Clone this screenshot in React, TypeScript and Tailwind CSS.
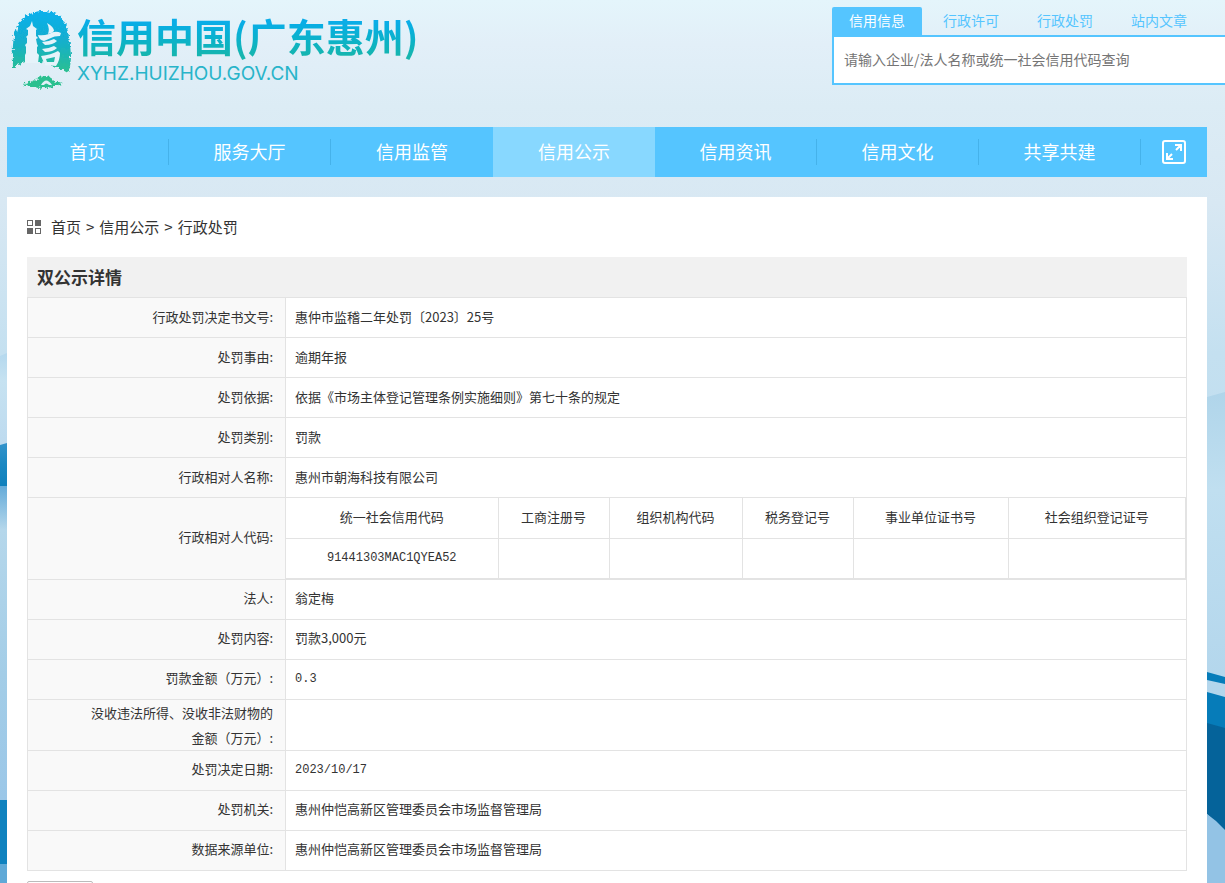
import React from 'react'

type Row = {
  label: string,
  value?: string,
  mono?: boolean,
  codes?: boolean
}

const tabs = ['信用信息', '行政许可', '行政处罚', '站内文章']
const menus = ['首页', '服务大厅', '信用监管', '信用公示', '信用资讯', '信用文化', '共享共建']

const rows: Row[] = [
  { label: '行政处罚决定书文号:', value: '惠仲市监稽二年处罚〔2023〕25号' },
  { label: '处罚事由:', value: '逾期年报' },
  { label: '处罚依据:', value: '依据《市场主体登记管理条例实施细则》第七十条的规定' },
  { label: '处罚类别:', value: '罚款' },
  { label: '行政相对人名称:', value: '惠州市朝海科技有限公司' },
  { label: '行政相对人代码:', codes: true },
  { label: '法人:', value: '翁定梅' },
  { label: '处罚内容:', value: '罚款3,000元' },
  { label: '罚款金额（万元）:', value: '0.3', mono: true },
  { label: '没收违法所得、没收非法财物的金额（万元）:' },
  { label: '处罚决定日期:', value: '2023/10/17', mono: true },
  { label: '处罚机关:', value: '惠州仲恺高新区管理委员会市场监督管理局' },
  { label: '数据来源单位:', value: '惠州仲恺高新区管理委员会市场监督管理局' },
]

const codes = [
  { name: '统一社会信用代码', value: '91441303MAC1QYEA52', width: 'w-[212px]' },
  { name: '工商注册号', value: '', width: 'w-[111px]' },
  { name: '组织机构代码', value: '', width: 'w-[133px]' },
  { name: '税务登记号', value: '', width: 'w-[111px]' },
  { name: '事业单位证书号', value: '', width: 'w-[155px]' },
  { name: '社会组织登记证号', value: '', width: '' },
]

const Backdrop = () => (
  <svg className="absolute inset-0 w-full h-full" viewBox="0 0 1225 883" preserveAspectRatio="none" aria-hidden="true">
    <defs>
      <linearGradient id="sky" x1="0" y1="0" x2="0" y2="1">
        <stop offset="0" stopColor="#e4f5fb" />
        <stop offset="0.05" stopColor="#e2eff8" />
        <stop offset="0.12" stopColor="#dcecf5" />
        <stop offset="0.23" stopColor="#d8e8f3" />
        <stop offset="0.4" stopColor="#c4e0f0" />
        <stop offset="1" stopColor="#b4d6ec" />
      </linearGradient>
      <linearGradient id="hillLeft" x1="0" y1="0" x2="0" y2="1">
        <stop offset="0" stopColor="#b4d8ee" />
        <stop offset="0.3" stopColor="#c6e2f1" />
        <stop offset="1" stopColor="#bddaef" />
      </linearGradient>
      <linearGradient id="deepLeft" x1="0" y1="0" x2="0" y2="1">
        <stop offset="0" stopColor="#3393cb" />
        <stop offset="0.5" stopColor="#1b88c2" />
        <stop offset="1" stopColor="#0f80bc" />
      </linearGradient>
      <linearGradient id="waterLeft" x1="0" y1="0" x2="0" y2="1">
        <stop offset="0" stopColor="#64abd9" />
        <stop offset="0.14" stopColor="#b5d7eb" />
        <stop offset="0.6" stopColor="#a3cde7" />
        <stop offset="1" stopColor="#9bc7e8" />
      </linearGradient>
      <linearGradient id="hillRight" x1="0" y1="0" x2="0" y2="1">
        <stop offset="0" stopColor="#b0d5ea" />
        <stop offset="0.2" stopColor="#c0dff0" />
        <stop offset="1" stopColor="#a6cde8" />
      </linearGradient>
    </defs>
    <rect width="1225" height="883" fill="url(#sky)" />
    <path d="M0 356 L7 353 V446 H0z" fill="url(#hillLeft)" />
    <path d="M0 445 L7 443 V486 H0z" fill="url(#deepLeft)" />
    <rect y="486" width="7" height="314" fill="url(#waterLeft)" />
    <rect y="800" width="7" height="64" fill="#0f82bf" />
    <rect y="864" width="7" height="19" fill="#5fa9d7" />
    <path d="M1207 397 L1225 392 V883 H1207z" fill="url(#hillRight)" />
    <path d="M1207 672 L1225 677 V684 L1207 680z" fill="#067cb9" />
    <path d="M1207 692 L1225 697 V730 H1207z" fill="#067cb9" />
    <path d="M1207 723 L1225 728 V832 L1207 814z" fill="#05639a" />
    <path d="M1207 814 L1216 821 L1225 830 V883 H1207z" fill="#93c3e5" />
  </svg>
)

const LogoMark = () => (
  <svg width="66" height="84" viewBox="0 0 66 84" aria-hidden="true">
    <defs>
      <linearGradient id="seal" x1="0" y1="0" x2="0" y2="1">
        <stop offset="0" stopColor="#10b0ec" />
        <stop offset="0.45" stopColor="#12aed0" />
        <stop offset="1" stopColor="#2cc08f" />
      </linearGradient>
      {/* rough, stamped edge */}
      <filter id="rough" x="-10%" y="-10%" width="120%" height="120%">
        <feTurbulence type="fractalNoise" baseFrequency="0.35" numOctaves="2" seed="4" result="noise" />
        <feDisplacementMap in="SourceGraphic" in2="noise" scale="6" xChannelSelector="R" yChannelSelector="G" />
      </filter>
    </defs>
    <g filter="url(#rough)">
      <path
        d="M35 3 C46 3 53 7 57 15 C61 23 62 35 63 47 C63 54 62 60 60 65 C51 60 44 57 37 55 C30 53 22 53 15 55 C11 56 8 58 5 61 C5 50 4 40 6 29 C8 19 11 12 18 8 C23 5 28 3 35 3z"
        fill="url(#seal)"
      />
      <path d="M13 75 C21 75 26 73 29 71 C36 66 42 68 46 73 C49 75 52 74 56 75 C51 77 46 78 41 80 L36 79 31 80 C25 78 18 78 13 75z" fill="#2cc08f" />
    </g>
    <path d="M24 13 L25 18 29 21 28 22 28 28 30 30 28 31 29 36 30 38 29 39 29 45 31 47 30 55 17 55 17 47 18 45 18 39 17 37 19 35 19 30 18 29 20 27 20 22 18 21 22 18z" fill="#e5f3fa" />
    <g fill="#e5f3fa">
      <path d="M39 15 Q46 19 46 23 Q43 26 40 26 Q42 21 39 15z" />
      <path d="M30 27 Q35 28 41 26 Q47 22 53 25 L52 28 Q46 28 43 30 L36 33 Q31 32 30 27z" />
      <path d="M34 34 Q40 34 46 31 L49 33 Q45 37 37 37z" />
      <path d="M34 41 Q40 41 46 38 L49 40 Q45 44 37 44z" />
      <path fillRule="evenodd" d="M33 48 Q43 47 50 43 L52 45 Q52 52 48 58 L37 57z M38 51 L39 54 46 54 47 49z" />
    </g>
    <path d="M33 77 Q38 68 44 77z" fill="#e2f0f8" />
    <path d="M36 77 Q38 74 41 77z" fill="#2cc08f" />
  </svg>
)

const Header = () => (
  <header className="flex items-start justify-between pl-2 h-[127px]">
    <a href="#" className="flex items-start pt-2">
      <LogoMark />
      <span className="block pl-[3px]">
        <span className="block h-14 leading-[54px] text-[39px] font-bold bg-gradient-to-b from-[#0aade8] from-25% to-[#16b5ae] to-85% bg-clip-text text-transparent whitespace-nowrap">信用中国(广东惠州)</span>
        <span className="block leading-5 text-[19px] text-[#28b4c9] font-['Inter','Liberation_Sans',sans-serif]">XYHZ.HUIZHOU.GOV.CN</span>
      </span>
    </a>
    <form className="w-[393px] pt-[7px]">
      <div className="flex gap-1">
        {tabs.map((tab, i) => (
          <button
            key={tab}
            type="button"
            className={i === 0
              ? 'w-[90px] h-7 pb-[2px] text-sm text-white bg-[#55c5ff] rounded-t-xs'
              : 'w-[90px] h-7 pb-[2px] text-sm text-[#55c5ff]'}
          >
            {tab}
          </button>
        ))}
      </div>
      <input
        type="text"
        aria-label="查询"
        placeholder="请输入企业/法人名称或统一社会信用代码查询"
        className="block w-full h-[50px] pl-[10px] pb-[2px] text-sm bg-white border-2 border-r-0 border-[#55c5ff] placeholder:text-[#757575] outline-none"
      />
    </form>
  </header>
)

const Nav = () => (
  <nav className="flex h-[50px] bg-[#55c5ff] text-white text-lg">
    {menus.map((menu) => (
      <a
        key={menu}
        href="#"
        className={menu === '信用公示' ? 'flex flex-1 items-center bg-[#88d8ff]' : 'flex flex-1 items-center'}
      >
        <span className={menu === '信用监管' || menu === '信用公示'
          ? 'flex-1 pb-[2px] text-center leading-6'
          : 'flex-1 pb-[2px] text-center leading-6 border-r border-[#45b2ea]'}
        >
          {menu}
        </span>
      </a>
    ))}
    <button type="button" aria-label="展开" className="flex items-center justify-center w-[66px]">
      <svg width="24" height="24" viewBox="0 0 24 24" fill="none" stroke="currentColor" strokeWidth="2">
        <rect x="1" y="1" width="22" height="22" rx="2" />
        <path d="M13 5 H20 M19 4 V11 M19 5 L14 10" />
        <path d="M5 13 V20 M4 19 H11 M5 19 L10 14" />
      </svg>
    </button>
  </nav>
)

const CodeTable = () => (
  <table className="w-full table-fixed border-collapse text-center">
    <thead>
      <tr className="h-10 border-b border-[#e3e3e3]">
        {codes.map((code) => (
          <th key={code.name} scope="col" className={`${code.width} pb-[3px] font-normal border-r border-[#e3e3e3]`}>{code.name}</th>
        ))}
      </tr>
    </thead>
    <tbody>
      <tr className="h-10 border-b border-[#e3e3e3]">
        {codes.map((code) => (
          <td key={code.name} className="text-xs font-['Liberation_Mono',monospace] border-r border-[#e3e3e3]">{code.value}</td>
        ))}
      </tr>
    </tbody>
  </table>
)

const App = () => {
  return (
    <div className="relative h-screen overflow-hidden text-[#333] font-['Noto_Sans_CJK_SC',sans-serif]">
      <Backdrop />
      <div className="relative">
        <Header />
        <div className="pl-[7px] pr-[18px]">
          <Nav />
          <main className="mt-5 px-5 pb-10 bg-white">
            <div className="flex items-center gap-[10px] h-[60px] text-[15px]">
              <svg width="14" height="14" viewBox="0 0 14 14" fill="#666" aria-hidden="true">
                <path fillRule="evenodd" d="M0 0H6V6H0z M1 1V5H5V1z" />
                <rect x="8" width="6" height="6" />
                <rect y="8" width="6" height="6" />
                <path fillRule="evenodd" d="M8 8H14V14H8z M9 9V13H13V9z" />
              </svg>
              <div className="flex gap-[5px]">
                <a href="#">首页</a>
                <span>&gt;</span>
                <a href="#">信用公示</a>
                <span>&gt;</span>
                <a href="#">行政处罚</a>
              </div>
            </div>
            <h1 className="h-10 pl-[10px] leading-10 text-[17px] font-bold bg-[#f1f1f1]">双公示详情</h1>
            <table className="w-full table-fixed border-collapse text-[13px] leading-[25px]">
              <tbody>
                {rows.map((row) => (
                  <tr key={row.label} className="h-10">
                    <th scope="row" className={row.value || row.codes
                      ? 'w-[258px] pl-[60px] pr-3 pb-[3px] text-right font-normal bg-[#f9f9f9] border border-[#e3e3e3]'
                      : 'w-[258px] pl-[60px] pr-3 text-right font-normal bg-[#f9f9f9] border border-[#e3e3e3]'}
                    >
                      {row.label}
                    </th>
                    {row.codes
                      ? <td className="p-0 border border-[#e3e3e3]"><CodeTable /></td>
                      : (
                        <td className={row.mono
                          ? "px-[9px] text-xs font-['Liberation_Mono',monospace] border border-[#e3e3e3]"
                          : 'px-[9px] pb-[3px] border border-[#e3e3e3]'}
                        >
                          {row.value}
                        </td>
                      )}
                  </tr>
                ))}
              </tbody>
            </table>
            <button type="button" aria-label="返回" className="block mt-[10px] w-[66px] h-8 bg-white border border-[#bbb] rounded-xs"></button>
          </main>
        </div>
      </div>
    </div>
  )
}

export default App
